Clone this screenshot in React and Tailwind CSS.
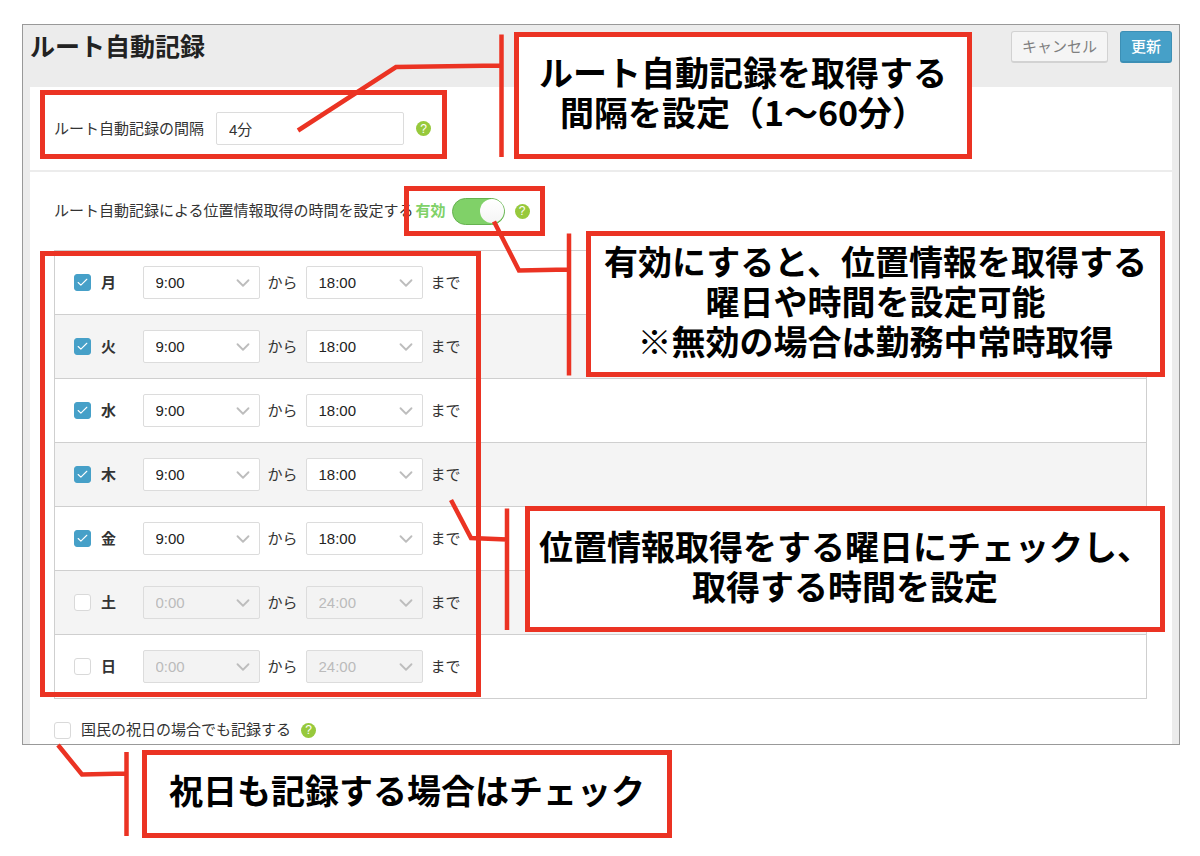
import { useState } from 'react'
import { Check, ChevronDown } from 'lucide-react'

const initialDays = [
  { id: 'mon', name: '月', enabled: true, from: '9:00', to: '18:00' },
  { id: 'tue', name: '火', enabled: true, from: '9:00', to: '18:00' },
  { id: 'wed', name: '水', enabled: true, from: '9:00', to: '18:00' },
  { id: 'thu', name: '木', enabled: true, from: '9:00', to: '18:00' },
  { id: 'fri', name: '金', enabled: true, from: '9:00', to: '18:00' },
  { id: 'sat', name: '土', enabled: false, from: '0:00', to: '24:00' },
  { id: 'sun', name: '日', enabled: false, from: '0:00', to: '24:00' },
]

const hours = Array.from({ length: 25 }, (_, i) => `${i}:00`)

function HelpButton({ label }) {
  return (
    <button
      type="button"
      aria-label={label}
      className="flex size-[15px] shrink-0 items-center justify-center rounded-full bg-[#97c93c] text-[12px] leading-none text-white"
    >
      ?
    </button>
  )
}

function Checkbox({ id, checked, onChange }) {
  return (
    <span className="relative flex size-[17px] shrink-0">
      <input
        id={id}
        type="checkbox"
        checked={checked}
        onChange={onChange}
        className="size-full appearance-none rounded-[3px] border border-[#d9d9d9] bg-white checked:border-[#46a0c8] checked:bg-[#46a0c8]"
      />
      {checked && (
        <Check size={13} strokeWidth={2} className="pointer-events-none absolute inset-0 m-auto text-white" />
      )}
    </span>
  )
}

function TimeSelect({ label, value, disabled, onChange }) {
  return (
    <span className="relative flex w-[117px]">
      <select
        aria-label={label}
        value={value}
        disabled={disabled}
        onChange={onChange}
        className="h-[33px] w-full appearance-none rounded-[2px] border border-[#dcdcdc] bg-white px-3 text-[15px] text-[#222] disabled:bg-[#f3f3f3] disabled:text-[#bbb] disabled:opacity-100"
      >
        {hours.map((hour) => (
          <option key={hour}>{hour}</option>
        ))}
      </select>
      <ChevronDown size={22} className="pointer-events-none absolute top-1.5 right-1.5 text-[#bdbdbd]" />
    </span>
  )
}

function Callout({ className, children }) {
  return (
    <p
      className={`absolute border-5 border-[#eb3323] bg-white text-center font-['Noto_Sans_CJK_JP',sans-serif] text-[34px] leading-10 font-bold whitespace-nowrap text-black ${className}`}
    >
      {children}
    </p>
  )
}

function Annotations() {
  return (
    <>
      {/* Highlight frames */}
      <div className="pointer-events-none absolute top-[90px] left-10 h-[69px] w-[407px] border-5 border-[#eb3323]" />
      <div className="pointer-events-none absolute top-[186px] left-[404px] h-[50px] w-[141px] border-5 border-[#eb3323]" />
      <div className="pointer-events-none absolute top-[251px] left-10 h-[446px] w-[441px] border-5 border-[#eb3323]" />

      {/* Leader lines */}
      <svg
        width="1200"
        height="856"
        className="pointer-events-none absolute top-0 left-0"
        fill="none"
        stroke="#eb3323"
        strokeWidth="4.5"
        aria-hidden="true"
      >
        <path d="M501.500 34.500V157M298 130.500L396 67L501 65.500" />
        <path d="M569 233.500V375.500M494 221.500L519 270.500L569 269.500" />
        <path d="M507 508.500V630M451 500L471 538L507 539.500" />
        <path d="M126.500 752V836M58 745L82 774.500L126 773.500" />
      </svg>

      <Callout className="top-8 left-[514px] h-[127px] w-[458px] pt-[15px]">
        ルート自動記録を取得する
        <br />
        間隔を設定（1～60分）
      </Callout>
      <Callout className="top-[231px] left-[586px] h-[146px] w-[579px] pt-[5px]">
        有効にすると、位置情報を取得する
        <br />
        曜日や時間を設定可能
        <br />
        ※無効の場合は勤務中常時取得
      </Callout>
      <Callout className="top-[506px] left-[525px] h-[126px] w-[640px] pt-[15px]">
        位置情報取得をする曜日にチェックし、
        <br />
        取得する時間を設定
      </Callout>
      <Callout className="top-[750px] left-[142px] h-[88px] w-[530px] pt-[15px]">
        祝日も記録する場合はチェック
      </Callout>
    </>
  )
}

export default function App() {
  const [interval, setInterval] = useState('4分')
  const [scheduled, setScheduled] = useState(true)
  const [holidays, setHolidays] = useState(false)
  const [days, setDays] = useState(initialDays)

  const updateDay = (id, change) => {
    setDays(days.map((day) => (day.id === id ? { ...day, ...change } : day)))
  }

  return (
    <div className="relative bg-white pt-6 pr-5 pb-28 pl-[22px] font-['Liberation_Sans','Noto_Sans_CJK_JP',sans-serif] text-[15px] leading-5 text-[#333]">
      <main className="border border-[#999] bg-[#ececec] px-[7px]">
        {/* Header */}
        <header className="flex h-[62px] items-start justify-between pt-1.5">
          <h1 className="text-[25px] leading-8 font-bold text-[#222]">ルート自動記録</h1>
          <div className="flex gap-3">
            <button
              type="button"
              className="h-8 rounded-[3px] border border-b-2 border-[#d2d2d2] bg-[#f5f5f5] px-2.5 text-[15px] text-[#808080]"
            >
              キャンセル
            </button>
            <button
              type="button"
              className="h-8 rounded-[3px] border border-b-2 border-[#3c8fb5] bg-[#46a0c8] px-2.5 text-[15px] font-medium text-white"
            >
              更新
            </button>
          </div>
        </header>

        {/* Interval */}
        <section className="flex items-center border-b-2 border-[#ececec] bg-white px-6 pt-[25px] pb-[25px]">
          <label htmlFor="interval">ルート自動記録の間隔</label>
          <input
            id="interval"
            type="text"
            value={interval}
            onChange={(e) => setInterval(e.target.value)}
            className="mr-3 ml-3 h-[33px] w-[188px] rounded-[2px] border border-[#dcdcdc] bg-white px-3 text-[15px]"
          />
          <HelpButton label="ルート自動記録の間隔について" />
        </section>

        {/* Schedule */}
        <section className="bg-white pt-6 pr-[25px] pb-1 pl-6">
          <div className="mb-6 flex h-[30px] items-center">
            <label htmlFor="scheduled">ルート自動記録による位置情報取得の時間を設定する</label>
            <span className="mr-1.5 ml-0.5 font-bold text-[#80d168]">有効</span>
            <input
              id="scheduled"
              type="checkbox"
              role="switch"
              checked={scheduled}
              onChange={(e) => setScheduled(e.target.checked)}
              className="mr-2.5 flex h-[27px] w-[53px] appearance-none items-center rounded-full border border-[#bbb] bg-[#ccc] before:size-6 before:rounded-full before:bg-linear-to-b before:from-white before:to-[#f5f5f5] before:content-[''] checked:justify-end checked:border-[#66b250] checked:bg-[#80d168]"
            />
            <HelpButton label="取得時間の設定について" />
          </div>

          <table className="w-full border-collapse border border-[#cfcfcf]">
            <tbody>
              {days.map((day) => (
                <tr key={day.id} className="h-16 border-b border-[#cfcfcf] even:bg-[#f4f4f4]">
                  <th scope="row" className="w-22 p-0 pl-[19px]">
                    <div className="flex items-center gap-2.5">
                      <Checkbox
                        id={day.id}
                        checked={day.enabled}
                        onChange={(e) => updateDay(day.id, { enabled: e.target.checked })}
                      />
                      <label htmlFor={day.id}>{day.name}</label>
                    </div>
                  </th>
                  <td className="p-0">
                    <div className="flex items-center gap-2">
                      <TimeSelect
                        label={`${day.name} 開始`}
                        value={day.from}
                        disabled={!day.enabled}
                        onChange={(e) => updateDay(day.id, { from: e.target.value })}
                      />
                      <span>から</span>
                      <TimeSelect
                        label={`${day.name} 終了`}
                        value={day.to}
                        disabled={!day.enabled}
                        onChange={(e) => updateDay(day.id, { to: e.target.value })}
                      />
                      <span>まで</span>
                    </div>
                  </td>
                </tr>
              ))}
            </tbody>
          </table>

          <div className="mt-[21px] flex items-center">
            <Checkbox id="holidays" checked={holidays} onChange={(e) => setHolidays(e.target.checked)} />
            <label htmlFor="holidays" className="mr-2.5 ml-2.5">国民の祝日の場合でも記録する</label>
            <HelpButton label="祝日の記録について" />
          </div>
        </section>
      </main>

      <Annotations />
    </div>
  )
}
